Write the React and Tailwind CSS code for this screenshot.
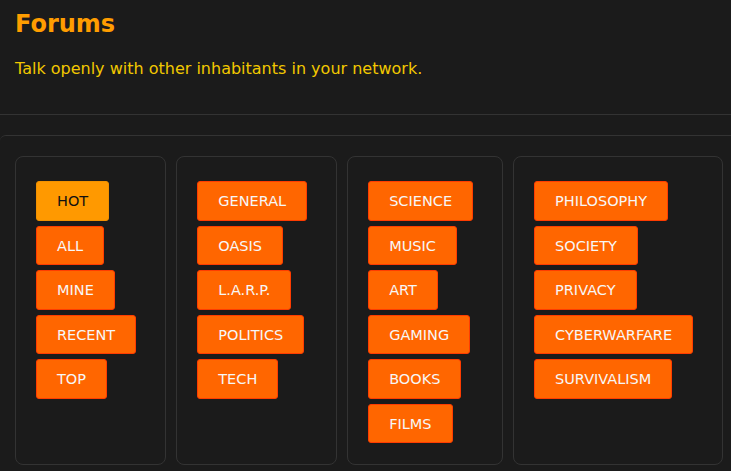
import React from 'react';

const columns = [
  ['HOT', 'ALL', 'MINE', 'RECENT', 'TOP'],
  ['GENERAL', 'OASIS', 'L.A.R.P.', 'POLITICS', 'TECH'],
  ['SCIENCE', 'MUSIC', 'ART', 'GAMING', 'BOOKS', 'FILMS'],
  ['PHILOSOPHY', 'SOCIETY', 'PRIVACY', 'CYBERWARFARE', 'SURVIVALISM'],
];

const ForumButton = ({ label, active }) => (
  <button
    className={`self-start rounded-[3px] border px-[20px] pt-[11px] pb-[9px] text-[14.5px] leading-[17.5px] ${
      active
        ? 'bg-[#ff9900] border-[#f29100] text-[#111111]'
        : 'bg-[#ff6600] border-[#ff3c00] text-[#f7f7f7]'
    }`}
  >
    {label}
  </button>
);

export default function App() {
  return (
    <div
      className="min-h-[471px] bg-[#1b1b1b] overflow-hidden"
      style={{ fontFamily: '"DejaVu Sans", sans-serif' }}
    >
      {/* Header */}
      <div className="px-[15px] pt-[10px]">
        <h1 className="text-[24px] font-bold leading-[28px] text-[#ff9d00]">Forums</h1>
        <p className="mt-[19px] text-[16px] leading-[24px] text-[#f2c800]">
          Talk openly with other inhabitants in your network.
        </p>
      </div>

      <div className="mt-[33px] border-t border-[#333333]" />
      <div className="mt-[20px] border-t border-[#333333] rounded-tl-[6px]">
        {/* Category columns */}
        <div className="flex gap-[10px] px-[15px] pt-[20px]">
          {columns.map((col, i) => (
            <div
              key={i}
              className={`flex flex-col gap-[5px] rounded-[8px] border border-[#333333] pl-[20px] pr-[29px] pt-[24px] pb-[21px] ${
                i === 3 ? 'min-h-[308px]' : ''
              }`}
            >
              {col.map((label) => (
                <ForumButton key={label} label={label} active={label === 'HOT'} />
              ))}
            </div>
          ))}
        </div>
      </div>
    </div>
  );
}
